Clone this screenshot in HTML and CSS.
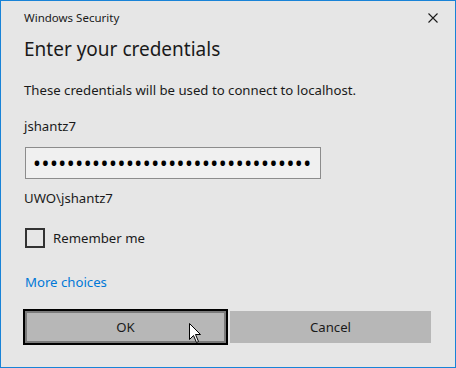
FILE: index.html
```html
<!DOCTYPE html>
<html lang="en">
<head>
    <meta charset="UTF-8">
    <title>Windows Security</title>
    <link rel="stylesheet" href="styles.css">
</head>
<body>
    <div class="dialog">
        <div class="titlebar">
            <span class="caption">Windows Security</span>
            <svg class="close" width="10" height="10" viewBox="0 0 10 10">
                <path d="M0.5 0.5 L9.5 9.5 M9.5 0.5 L0.5 9.5" stroke="#1a1a1a" stroke-width="1.1" fill="none"/>
            </svg>
        </div>
        <h1>Enter your credentials</h1>
        <p class="info">These credentials will be used to connect to localhost.</p>
        <p class="user">jshantz7</p>
        <input class="password" type="password" value="xxxxxxxxxxxxxxxxxxxxxxxxxxxxxxxxx" readonly>
        <p class="domain">UWO\jshantz7</p>
        <label class="remember">
            <span class="box"></span>
            Remember me
        </label>
        <a class="more" href="#">More choices</a>
        <div class="buttons">
            <button class="btn ok">OK</button>
            <button class="btn">Cancel</button>
            <svg class="cursor" width="13" height="21" viewBox="0 0 13 21">
                <path d="M0.5 0.5 L0.5 16.5 L4.5 12.5 L7.5 19.5 L9.5 18.5 L6.5 11.5 L11.5 11.5 Z" fill="#ffffff" stroke="#000000" stroke-width="1"/>
            </svg>
        </div>
    </div>
</body>
</html>
```

FILE: styles.css
```css
/* Dialog shell */
body {
    margin: 0;
    font-family: 'Noto Sans', sans-serif;
    color: #1a1a1a;
}
.dialog {
    box-sizing: border-box;
    width: 456px;
    height: 368px;
    border: 1px solid #1883d7;
    background: #e6e6e6;
    padding: 0 24px 0 23px;
}
.titlebar {
    display: flex;
    justify-content: space-between;
    align-items: center;
    height: 34px;
}
.caption {
    font-size: 11.5px;
    margin-top: -1px;
}
.close {
    margin-right: -7px;
}
h1 {
    font-size: 19px;
    font-weight: 400;
    margin: 0;
    line-height: 28px;
}
p {
    margin: 0;
    font-size: 13.2px;
    line-height: 20px;
}
.info {
    margin-top: 17px;
}
.user {
    margin-top: 16px;
}
.password {
    box-sizing: border-box;
    display: block;
    width: 296px;
    height: 32px;
    margin: 11px 0 0 1px;
    border: 1px solid #8c8c8c;
    background: #f0f0f0;
    padding: 0 7px;
    font-family: 'Noto Sans', sans-serif;
    font-size: 21px;
    letter-spacing: 0.55px;
    color: #000000;
    outline: none;
}
.domain {
    margin-top: 9px;
}
.remember {
    display: flex;
    align-items: center;
    gap: 8px;
    margin: 20px 0 0 1px;
    font-size: 13.2px;
}
.box {
    box-sizing: border-box;
    width: 20px;
    height: 20px;
    border: 2px solid #333333;
}
.more {
    display: block;
    margin: 24px 0 0 1px;
    font-size: 13.2px;
    line-height: 20px;
    color: #0078d7;
    text-decoration: none;
}
.buttons {
    position: relative;
    display: flex;
    gap: 4px;
    margin: 19px 0 0 1px;
}
.btn {
    box-sizing: border-box;
    width: 201px;
    height: 32px;
    border: 2px solid #b7b7b7;
    background: #b7b7b7;
    font-family: 'Noto Sans', sans-serif;
    font-size: 13.2px;
    color: #1a1a1a;
    padding: 0;
}
.btn.ok {
    border-color: #7a7a7a;
    outline: 2px solid #000000;
    box-shadow: 0 0 0 1px #ffffff;
}
.cursor {
    position: absolute;
    left: 164px;
    top: 12px;
}
```
